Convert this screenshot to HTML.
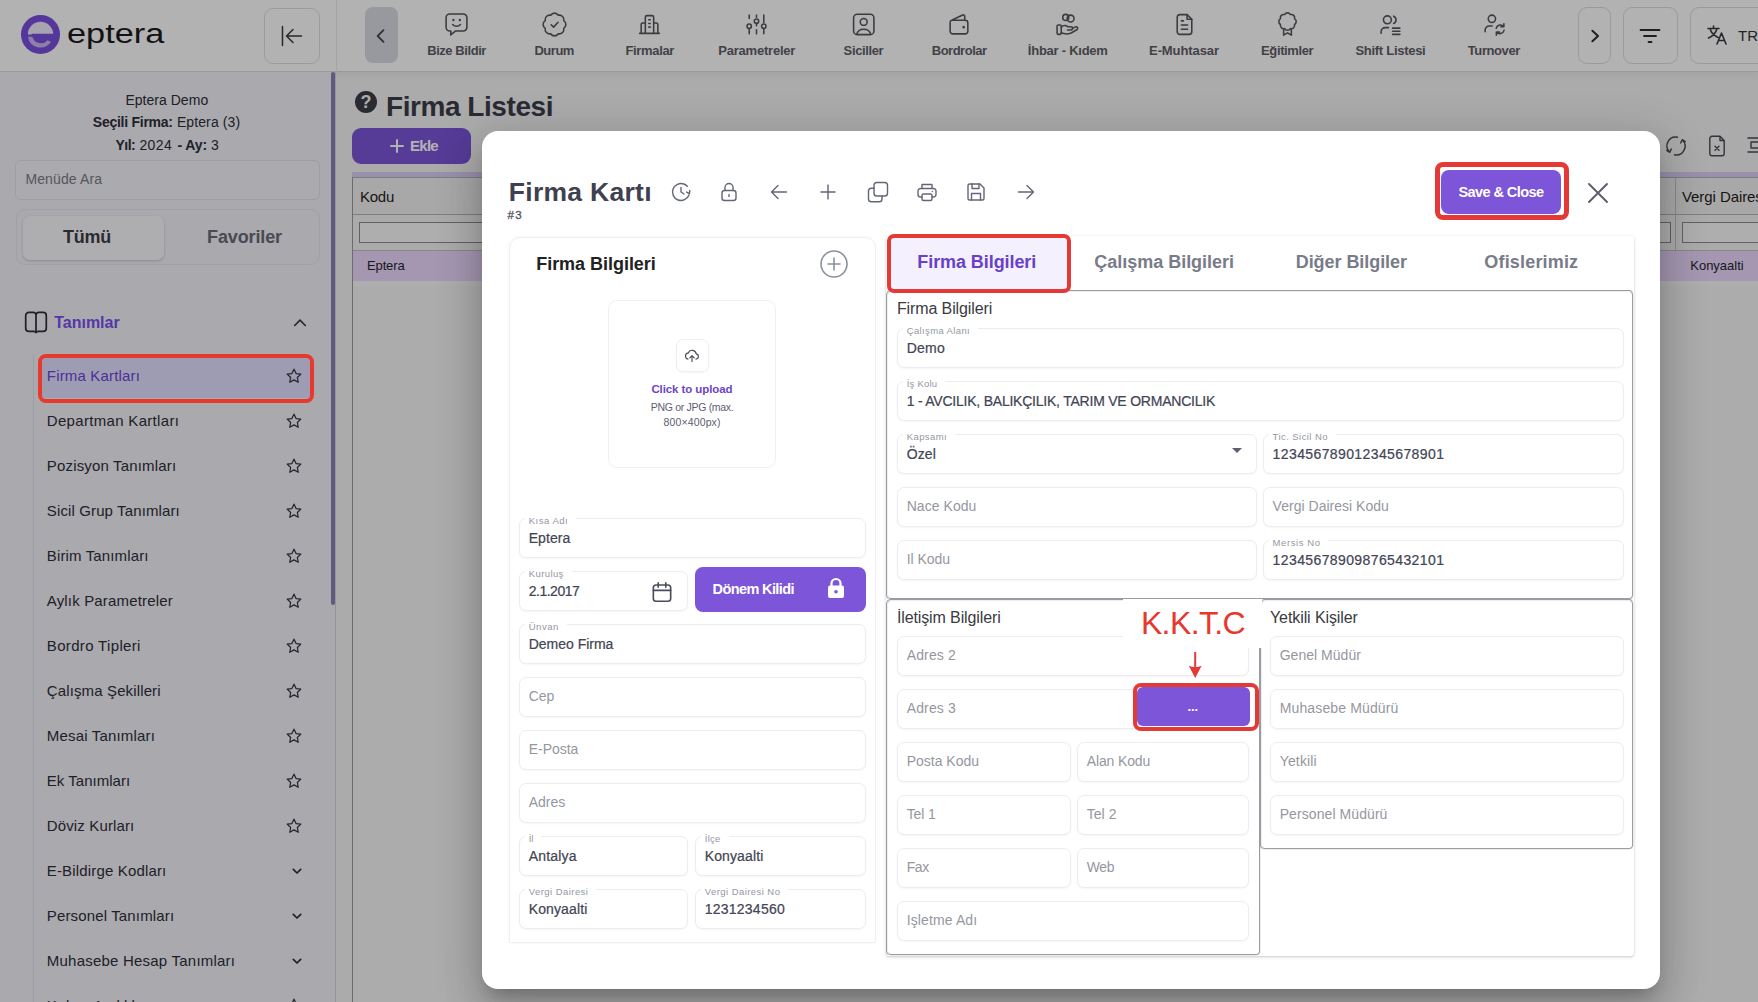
<!DOCTYPE html>
<html lang="tr"><head><meta charset="utf-8"><title>Firma Listesi</title>
<style>
html,body{margin:0;padding:0;}
body{width:1758px;height:1002px;overflow:hidden;position:relative;background:#f5f5f5;font-family:"Liberation Sans",sans-serif;}
.b{position:absolute;box-sizing:border-box;}
.t{position:absolute;white-space:nowrap;display:block;}
.f{position:absolute;box-sizing:border-box;border:1px solid #ededf1;border-radius:7px;background:#fff;box-shadow:0 1px 2px rgba(16,24,40,.04);}
.fs{position:absolute;box-sizing:border-box;border:2px groove rgb(236,238,243);border-radius:5px;}
</style></head><body>
<div class="b" style="left:336px;top:72px;width:1422px;height:930px;background:#f5f5f6;"></div>
<div class="b" style="left:0px;top:0px;width:1758px;height:72px;background:#fff;border-bottom:1px solid #dcdce0;box-shadow:0 2px 8px rgba(0,0,0,.06);"></div>
<div class="b" style="left:0px;top:72px;width:336px;height:930px;background:#f3f3fa;border-right:1px solid #d4d4da;"></div>
<div class="b" style="left:336px;top:0px;width:1px;height:72px;background:#ececef;"></div>
<div class="b" style="left:331px;top:72px;width:4.199999999999989px;height:533px;background:#8c81b7;border-radius:2px;"></div>
<svg class="b" style="left:19.800px;top:13.800px" width="41" height="41" viewBox="0 0 42 42">
<circle cx="21" cy="21" r="20" fill="#7a4fe0"/>
<path d="M8 21a13 13 0 0 1 26 0z" fill="#f0ebfb"/>
<path d="M8.3 24h20.5a8.6 8.6 0 0 1 -14.5 4.8z" fill="#c4b0f2" opacity=".0"/>
<path d="M8.2 23.2a13 13 0 0 0 23.5 5.6l-3.4-2a9 9 0 0 1 -15.6-3.6z" fill="#c9b8f3"/>
<rect x="12" y="20.2" width="22" height="3.4" fill="#7a4fe0"/>
</svg>
<span class="t" style="left:66.80px;top:14.80px;font-size:27px;line-height:38px;color:#1a1a1e;transform:scaleX(1.27);transform-origin:0 50%;">eptera</span>
<div class="b" style="left:264px;top:8px;width:56px;height:56px;border:1px solid #dedee2;border-radius:9px;background:#fff;"></div>
<svg class="b" style="left:279.00px;top:23.30px;" width="26" height="26" viewBox="0 0 26 26" fill="none" stroke="#3a3a42" stroke-width="1.5" stroke-linecap="round" stroke-linejoin="round"><path d="M3.500 3.500v19M22.500 13H8M14 6.500L7.500 13l6.500 6.500"/></svg>
<div class="b" style="left:365px;top:7px;width:33px;height:56px;background:#d9dce3;border-radius:8px;"></div>
<svg class="b" style="left:371.00px;top:26.00px;" width="20" height="20" viewBox="0 0 24 24" fill="none" stroke="#45454d" stroke-width="2.2" stroke-linecap="round" stroke-linejoin="round"><path d="M15 5l-7 7 7 7"/></svg>
<span class="t" style="left:427.18px;top:41.50px;font-size:13px;line-height:18px;color:#5d5e66;font-weight:700;letter-spacing:-0.434px;">Bize Bildir</span>
<svg class="b" style="left:444.30px;top:11.70px;" width="25" height="25" viewBox="0 0 24 24" fill="none" stroke="#55565e" stroke-width="1.5" stroke-linecap="round" stroke-linejoin="round"><path d="M5.500 2h13a3.500 3.500 0 0 1 3.500 3.500v9.200a3.500 3.500 0 0 1-3.500 3.500h-7.300l-4.700 3.800v-3.800h-1a3.500 3.500 0 0 1-3.500-3.500v-9.200a3.500 3.500 0 0 1 3.500-3.500z"/><path d="M9 7.600v.2M15.200 7.600v.2" stroke-width="2.200"/><path d="M8.300 12c2 2.300 5.500 2.300 7.500 0"/></svg>
<span class="t" style="left:534.46px;top:41.50px;font-size:13px;line-height:18px;color:#5d5e66;font-weight:700;letter-spacing:-0.477px;">Durum</span>
<svg class="b" style="left:541.95px;top:11.70px;" width="25" height="25" viewBox="0 0 24 24" fill="none" stroke="#55565e" stroke-width="1.5" stroke-linecap="round" stroke-linejoin="round"><path d="M8.330 3.130A4.300 4.300 0 0 1 15.670 3.130A4.300 4.300 0 0 1 20.870 8.330A4.300 4.300 0 0 1 20.870 15.670A4.300 4.300 0 0 1 15.670 20.870A4.300 4.300 0 0 1 8.330 20.870A4.300 4.300 0 0 1 3.130 15.670A4.300 4.300 0 0 1 3.130 8.330A4.300 4.300 0 0 1 8.330 3.130z"/><path d="M8.800 12.200l2.300 2.300 4.300-4.600"/></svg>
<span class="t" style="left:625.52px;top:41.50px;font-size:13px;line-height:18px;color:#5d5e66;font-weight:700;letter-spacing:-0.351px;">Firmalar</span>
<svg class="b" style="left:637.45px;top:11.70px;" width="25" height="25" viewBox="0 0 24 24" fill="none" stroke="#55565e" stroke-width="1.5" stroke-linecap="round" stroke-linejoin="round"><path d="M2.500 20.500h19M8 20.500V5a1.500 1.500 0 0 1 1.500-1.500h5A1.500 1.500 0 0 1 16 5v15.500M4 20.500V12a1.500 1.500 0 0 1 1.500-1.500H8M16 10.500h2.500A1.500 1.500 0 0 1 20 12v8.500M11.300 7.500h1.400M11.300 11h1.400M11.300 14.500h1.400"/></svg>
<span class="t" style="left:718.29px;top:41.50px;font-size:13px;line-height:18px;color:#5d5e66;font-weight:700;letter-spacing:-0.217px;">Parametreler</span>
<svg class="b" style="left:744.35px;top:11.70px;" width="25" height="25" viewBox="0 0 24 24" fill="none" stroke="#55565e" stroke-width="1.5" stroke-linecap="round" stroke-linejoin="round"><path d="M5 3v3.200M5 15.800v5M12 3v2M12 11v2.200M12 17v3.800M19 3v7M19 15.800v5"/><circle cx="5" cy="13.700" r="2.100"/><circle cx="12" cy="8.800" r="2.100"/><circle cx="19" cy="13.700" r="2.100"/></svg>
<span class="t" style="left:843.61px;top:41.50px;font-size:13px;line-height:18px;color:#5d5e66;font-weight:700;letter-spacing:-0.381px;">Siciller</span>
<svg class="b" style="left:851.10px;top:11.70px;" width="25" height="25" viewBox="0 0 24 24" fill="none" stroke="#55565e" stroke-width="1.5" stroke-linecap="round" stroke-linejoin="round"><rect x="2.500" y="2.200" width="19.500" height="19.500" rx="3.500"/><circle cx="12.200" cy="9.500" r="3.300"/><path d="M5.500 21.300c.8-3.200 3.200-4.800 6.700-4.800s5.900 1.600 6.700 4.800"/></svg>
<span class="t" style="left:931.75px;top:41.50px;font-size:13px;line-height:18px;color:#5d5e66;font-weight:700;letter-spacing:-0.492px;">Bordrolar</span>
<svg class="b" style="left:946.90px;top:11.70px;" width="25" height="25" viewBox="0 0 24 24" fill="none" stroke="#55565e" stroke-width="1.5" stroke-linecap="round" stroke-linejoin="round"><path d="M5 8h12.500a2.500 2.500 0 0 1 2.500 2.500v8a2.500 2.500 0 0 1-2.500 2.500H5.500A2.500 2.500 0 0 1 3 18.500V10c0-1.200.8-2 2-2.300l10-4.800c1-.4 2 .3 2 1.400V8"/><path d="M16 14.500v.1" stroke-width="2.400"/></svg>
<span class="t" style="left:1027.87px;top:41.50px;font-size:13px;line-height:18px;color:#5d5e66;font-weight:700;letter-spacing:-0.252px;">İhbar - Kıdem</span>
<svg class="b" style="left:1055.40px;top:11.70px;" width="25" height="25" viewBox="0 0 24 24" fill="none" stroke="#55565e" stroke-width="1.5" stroke-linecap="round" stroke-linejoin="round"><circle cx="10.300" cy="5.200" r="2.900"/><circle cx="15" cy="6.300" r="3.300"/><rect x="2" y="12.500" width="4" height="9" rx="1"/><path d="M6 14.500c2-1.800 4.500-1.800 6.500-.3h3a1.500 1.500 0 0 1 0 3h-3.500M6 20c3 1.300 6.500 1.300 9.500.2l5.800-3.400a1.500 1.500 0 0 0-1.600-2.500l-3.200 1.700"/></svg>
<span class="t" style="left:1149.06px;top:41.50px;font-size:13px;line-height:18px;color:#5d5e66;font-weight:700;letter-spacing:-0.089px;">E-Muhtasar</span>
<svg class="b" style="left:1171.55px;top:11.70px;" width="25" height="25" viewBox="0 0 24 24" fill="none" stroke="#55565e" stroke-width="1.5" stroke-linecap="round" stroke-linejoin="round"><path d="M14.500 2.500H7.500A2.500 2.500 0 0 0 5 5v14a2.500 2.500 0 0 0 2.500 2.500h9A2.500 2.500 0 0 0 19 19V7z"/><path d="M14.500 2.500V7H19M9 12.500h6M9 16.500h6M9 8.500h2"/></svg>
<span class="t" style="left:1261.10px;top:41.50px;font-size:13px;line-height:18px;color:#5d5e66;font-weight:700;letter-spacing:-0.392px;">Eğitimler</span>
<svg class="b" style="left:1274.85px;top:11.70px;" width="25" height="25" viewBox="0 0 24 24" fill="none" stroke="#55565e" stroke-width="1.5" stroke-linecap="round" stroke-linejoin="round"><path d="M9.210 3.260A3.200 3.200 0 0 1 14.790 3.260A3.200 3.200 0 0 1 18.740 7.210A3.200 3.200 0 0 1 18.740 12.790A3.200 3.200 0 0 1 14.790 16.740A3.200 3.200 0 0 1 9.210 16.740A3.200 3.200 0 0 1 5.260 12.790A3.200 3.200 0 0 1 5.260 7.210A3.200 3.200 0 0 1 9.210 3.260z" transform="translate(0,-.8)"/><path d="M8.300 16.500V22.200l3.700-2.200 3.700 2.200v-5.700"/></svg>
<span class="t" style="left:1355.46px;top:41.50px;font-size:13px;line-height:18px;color:#5d5e66;font-weight:700;letter-spacing:-0.283px;">Shift Listesi</span>
<svg class="b" style="left:1378.10px;top:11.70px;" width="25" height="25" viewBox="0 0 24 24" fill="none" stroke="#55565e" stroke-width="1.5" stroke-linecap="round" stroke-linejoin="round"><circle cx="9" cy="7.500" r="3.800"/><path d="M15 4a3.800 3.800 0 0 1 0 7M3 20.500v-1.500a4 4 0 0 1 4-4h3M14 15.500h7M14 18.500h7M14 21.500h7"/></svg>
<span class="t" style="left:1467.80px;top:41.50px;font-size:13px;line-height:18px;color:#5d5e66;font-weight:700;letter-spacing:-0.410px;">Turnover</span>
<svg class="b" style="left:1481.55px;top:11.70px;" width="25" height="25" viewBox="0 0 24 24" fill="none" stroke="#55565e" stroke-width="1.5" stroke-linecap="round" stroke-linejoin="round"><circle cx="9.500" cy="6.500" r="3.500"/><path d="M3 19v-1.500a4 4 0 0 1 4-4h2.800M13.600 15.600a4.200 4.200 0 0 1 7.300-1.600M21 11.300v2.900h-2.900M21.200 17.600a4.200 4.200 0 0 1-7.300 1.600M13.800 22.200v-2.900h2.900"/></svg>
<div class="b" style="left:1578px;top:7px;width:33px;height:57px;border:1px solid #dedee2;border-radius:9px;"></div>
<svg class="b" style="left:1585.80px;top:26.70px;" width="18" height="18" viewBox="0 0 24 24" fill="none" stroke="#2b2b33" stroke-width="2.7" stroke-linecap="round" stroke-linejoin="round"><path d="M8.500 5l7.500 7-7.500 7"/></svg>
<div class="b" style="left:1623px;top:7px;width:55px;height:57px;border:1px solid #dedee2;border-radius:9px;"></div>
<svg class="b" style="left:1638.00px;top:24.00px;" width="24" height="24" viewBox="0 0 24 24" fill="none" stroke="#2b2b33" stroke-width="1.8" stroke-linecap="round" stroke-linejoin="round"><path d="M2.500 6h19M6 12h12M10.500 18h3"/></svg>
<div class="b" style="left:1690px;top:7px;width:100px;height:57px;border:1px solid #dedee2;border-radius:9px;"></div>
<svg class="b" style="left:1705.00px;top:23.00px;" width="24" height="24" viewBox="0 0 24 24" fill="none" stroke="#3a3a42" stroke-width="1.6" stroke-linecap="round" stroke-linejoin="round"><path d="M3 5.500h11M8.500 3v2.500M5 5.500c1 4 4 7 8 9M12 5.500c-1 4-4 7.500-8.500 9.500M12 21l4.500-11 4.500 11M13.600 17.500h5.800"/></svg>
<span class="t" style="left:1738.00px;top:24.50px;font-size:15px;line-height:21px;color:#33343b;">TR</span>
<span class="t" style="left:125.40px;top:90.00px;font-size:14px;line-height:20px;color:#2e2e38;letter-spacing:0.029px;">Eptera Demo</span>
<span class="t" style="left:92.80px;top:112.00px;font-size:14px;line-height:20px;color:#2e2e38;font-weight:700;letter-spacing:-0.259px;">Seçili Firma:</span>
<span class="t" style="left:176.90px;top:112.00px;font-size:14px;line-height:20px;color:#2e2e38;letter-spacing:0.105px;">Eptera (3)</span>
<span class="t" style="left:115.40px;top:135.00px;font-size:14px;line-height:20px;color:#2e2e38;font-weight:700;letter-spacing:-0.496px;">Yıl:</span>
<span class="t" style="left:139.40px;top:135.00px;font-size:14px;line-height:20px;color:#2e2e38;letter-spacing:0.440px;">2024</span>
<span class="t" style="left:177.50px;top:135.00px;font-size:14px;line-height:20px;color:#2e2e38;font-weight:700;letter-spacing:-0.115px;">- Ay:</span>
<span class="t" style="left:211.00px;top:135.00px;font-size:14px;line-height:20px;color:#2e2e38;letter-spacing:0.015px;">3</span>
<div class="b" style="left:15px;top:160px;width:305px;height:40px;border:1px solid #e3e3ea;border-radius:6px;background:#f4f4fb;"></div>
<span class="t" style="left:25.40px;top:169.00px;font-size:14px;line-height:20px;color:#7b7b86;letter-spacing:0.130px;">Menüde Ara</span>
<div class="b" style="left:16px;top:209px;width:304px;height:56px;border:1px solid #e6e6ee;border-radius:9px;background:#f2f2f9;"></div>
<div class="b" style="left:22.5px;top:216px;width:141.0px;height:43.5px;border-radius:7px;background:#fafafd;box-shadow:0 1px 3px rgba(0,0,0,.18);"></div>
<span class="t" style="left:63.00px;top:224.80px;font-size:18px;line-height:25px;color:#3d3d48;font-weight:700;letter-spacing:-0.248px;">Tümü</span>
<span class="t" style="left:207.00px;top:224.80px;font-size:18px;line-height:25px;color:#6a6a76;font-weight:700;letter-spacing:-0.115px;">Favoriler</span>
<svg class="b" style="left:23.40px;top:309.00px;" width="26" height="26" viewBox="0 0 24 24" fill="none" stroke="#2e2e37" stroke-width="1.6" stroke-linecap="round" stroke-linejoin="round"><path d="M12 4.500v15.500M5.500 3.200h4a2.500 2.500 0 0 1 2.500 2.500 2.500 2.500 0 0 1 2.500-2.500h4a3 3 0 0 1 3 3v11.500a3 3 0 0 1-3 3h-4a2.500 2.500 0 0 0-2.500 1 2.500 2.500 0 0 0-2.500-1h-4a3 3 0 0 1-3-3V6.200a3 3 0 0 1 3-3z"/></svg>
<span class="t" style="left:54.30px;top:311.70px;font-size:16px;line-height:22px;color:#7a50ee;font-weight:700;letter-spacing:-0.025px;">Tanımlar</span>
<svg class="b" style="left:291.50px;top:315.30px;" width="16" height="16" viewBox="0 0 16 16" fill="none" stroke="#3a3a44" stroke-width="1.7" stroke-linecap="round" stroke-linejoin="round"><path d="M2.700 10.500L8 5.200l5.300 5.300"/></svg>
<div class="b" style="left:32.5px;top:355px;width:1.5px;height:647px;background:#e2def5;"></div>
<div class="b" style="left:42px;top:358px;width:268px;height:40px;background:#e3e0ff;border-radius:4px;"></div>
<span class="t" style="left:46.80px;top:364.70px;font-size:15px;line-height:21px;color:#6d45dd;letter-spacing:0.175px;">Firma Kartları</span>
<svg class="b" style="left:283.80px;top:366.00px;" width="20" height="20" viewBox="0 0 24 24" fill="none" stroke="#33333d" stroke-width="1.5" stroke-linecap="round" stroke-linejoin="round"><path d="M12 3.800l2.500 5.300 5.700.7-4.200 4 1.100 5.700L12 16.700l-5.100 2.800 1.100-5.700-4.200-4 5.700-.7z"/></svg>
<span class="t" style="left:46.80px;top:409.70px;font-size:15px;line-height:21px;color:#2e2e38;letter-spacing:0.315px;">Departman Kartları</span>
<svg class="b" style="left:283.80px;top:411.00px;" width="20" height="20" viewBox="0 0 24 24" fill="none" stroke="#33333d" stroke-width="1.5" stroke-linecap="round" stroke-linejoin="round"><path d="M12 3.800l2.500 5.300 5.700.7-4.200 4 1.100 5.700L12 16.700l-5.100 2.800 1.100-5.700-4.200-4 5.700-.7z"/></svg>
<span class="t" style="left:46.80px;top:454.70px;font-size:15px;line-height:21px;color:#2e2e38;letter-spacing:0.169px;">Pozisyon Tanımları</span>
<svg class="b" style="left:283.80px;top:456.00px;" width="20" height="20" viewBox="0 0 24 24" fill="none" stroke="#33333d" stroke-width="1.5" stroke-linecap="round" stroke-linejoin="round"><path d="M12 3.800l2.500 5.300 5.700.7-4.200 4 1.100 5.700L12 16.700l-5.100 2.800 1.100-5.700-4.200-4 5.700-.7z"/></svg>
<span class="t" style="left:46.80px;top:499.70px;font-size:15px;line-height:21px;color:#2e2e38;letter-spacing:0.125px;">Sicil Grup Tanımları</span>
<svg class="b" style="left:283.80px;top:501.00px;" width="20" height="20" viewBox="0 0 24 24" fill="none" stroke="#33333d" stroke-width="1.5" stroke-linecap="round" stroke-linejoin="round"><path d="M12 3.800l2.500 5.300 5.700.7-4.200 4 1.100 5.700L12 16.700l-5.100 2.800 1.100-5.700-4.200-4 5.700-.7z"/></svg>
<span class="t" style="left:46.80px;top:544.70px;font-size:15px;line-height:21px;color:#2e2e38;letter-spacing:0.137px;">Birim Tanımları</span>
<svg class="b" style="left:283.80px;top:546.00px;" width="20" height="20" viewBox="0 0 24 24" fill="none" stroke="#33333d" stroke-width="1.5" stroke-linecap="round" stroke-linejoin="round"><path d="M12 3.800l2.500 5.300 5.700.7-4.200 4 1.100 5.700L12 16.700l-5.100 2.800 1.100-5.700-4.200-4 5.700-.7z"/></svg>
<span class="t" style="left:46.80px;top:589.70px;font-size:15px;line-height:21px;color:#2e2e38;letter-spacing:0.161px;">Aylık Parametreler</span>
<svg class="b" style="left:283.80px;top:591.00px;" width="20" height="20" viewBox="0 0 24 24" fill="none" stroke="#33333d" stroke-width="1.5" stroke-linecap="round" stroke-linejoin="round"><path d="M12 3.800l2.500 5.300 5.700.7-4.200 4 1.100 5.700L12 16.700l-5.100 2.800 1.100-5.700-4.200-4 5.700-.7z"/></svg>
<span class="t" style="left:46.80px;top:634.70px;font-size:15px;line-height:21px;color:#2e2e38;letter-spacing:0.342px;">Bordro Tipleri</span>
<svg class="b" style="left:283.80px;top:636.00px;" width="20" height="20" viewBox="0 0 24 24" fill="none" stroke="#33333d" stroke-width="1.5" stroke-linecap="round" stroke-linejoin="round"><path d="M12 3.800l2.500 5.300 5.700.7-4.200 4 1.100 5.700L12 16.700l-5.100 2.800 1.100-5.700-4.200-4 5.700-.7z"/></svg>
<span class="t" style="left:46.80px;top:679.70px;font-size:15px;line-height:21px;color:#2e2e38;letter-spacing:0.129px;">Çalışma Şekilleri</span>
<svg class="b" style="left:283.80px;top:681.00px;" width="20" height="20" viewBox="0 0 24 24" fill="none" stroke="#33333d" stroke-width="1.5" stroke-linecap="round" stroke-linejoin="round"><path d="M12 3.800l2.500 5.300 5.700.7-4.200 4 1.100 5.700L12 16.700l-5.100 2.800 1.100-5.700-4.200-4 5.700-.7z"/></svg>
<span class="t" style="left:46.80px;top:724.70px;font-size:15px;line-height:21px;color:#2e2e38;letter-spacing:0.173px;">Mesai Tanımları</span>
<svg class="b" style="left:283.80px;top:726.00px;" width="20" height="20" viewBox="0 0 24 24" fill="none" stroke="#33333d" stroke-width="1.5" stroke-linecap="round" stroke-linejoin="round"><path d="M12 3.800l2.500 5.300 5.700.7-4.200 4 1.100 5.700L12 16.700l-5.100 2.800 1.100-5.700-4.200-4 5.700-.7z"/></svg>
<span class="t" style="left:46.80px;top:769.70px;font-size:15px;line-height:21px;color:#2e2e38;letter-spacing:0.026px;">Ek Tanımları</span>
<svg class="b" style="left:283.80px;top:771.00px;" width="20" height="20" viewBox="0 0 24 24" fill="none" stroke="#33333d" stroke-width="1.5" stroke-linecap="round" stroke-linejoin="round"><path d="M12 3.800l2.500 5.300 5.700.7-4.200 4 1.100 5.700L12 16.700l-5.100 2.800 1.100-5.700-4.200-4 5.700-.7z"/></svg>
<span class="t" style="left:46.80px;top:814.70px;font-size:15px;line-height:21px;color:#2e2e38;letter-spacing:0.134px;">Döviz Kurları</span>
<svg class="b" style="left:283.80px;top:816.00px;" width="20" height="20" viewBox="0 0 24 24" fill="none" stroke="#33333d" stroke-width="1.5" stroke-linecap="round" stroke-linejoin="round"><path d="M12 3.800l2.500 5.300 5.700.7-4.200 4 1.100 5.700L12 16.700l-5.100 2.800 1.100-5.700-4.200-4 5.700-.7z"/></svg>
<span class="t" style="left:46.80px;top:859.70px;font-size:15px;line-height:21px;color:#2e2e38;letter-spacing:0.160px;">E-Bildirge Kodları</span>
<svg class="b" style="left:290.30px;top:864.00px;" width="14" height="14" viewBox="0 0 14 14" fill="none" stroke="#2b2b34" stroke-width="1.7" stroke-linecap="round" stroke-linejoin="round"><path d="M3.300 5.300L7 9l3.700-3.700"/></svg>
<span class="t" style="left:46.80px;top:904.70px;font-size:15px;line-height:21px;color:#2e2e38;letter-spacing:0.145px;">Personel Tanımları</span>
<svg class="b" style="left:290.30px;top:909.00px;" width="14" height="14" viewBox="0 0 14 14" fill="none" stroke="#2b2b34" stroke-width="1.7" stroke-linecap="round" stroke-linejoin="round"><path d="M3.300 5.300L7 9l3.700-3.700"/></svg>
<span class="t" style="left:46.80px;top:949.70px;font-size:15px;line-height:21px;color:#2e2e38;letter-spacing:0.218px;">Muhasebe Hesap Tanımları</span>
<svg class="b" style="left:290.30px;top:954.00px;" width="14" height="14" viewBox="0 0 14 14" fill="none" stroke="#2b2b34" stroke-width="1.7" stroke-linecap="round" stroke-linejoin="round"><path d="M3.300 5.300L7 9l3.700-3.700"/></svg>
<span class="t" style="left:46.80px;top:994.70px;font-size:15px;line-height:21px;color:#2e2e38;letter-spacing:-0.030px;">Kıdem Aralıkları</span>
<svg class="b" style="left:283.80px;top:996.00px;" width="20" height="20" viewBox="0 0 24 24" fill="none" stroke="#33333d" stroke-width="1.5" stroke-linecap="round" stroke-linejoin="round"><path d="M12 3.800l2.500 5.300 5.700.7-4.200 4 1.100 5.700L12 16.700l-5.100 2.800 1.100-5.700-4.200-4 5.700-.7z"/></svg>
<svg class="b" style="left:355px;top:91px" width="22" height="22" viewBox="0 0 22 22"><circle cx="11" cy="11" r="11" fill="#3d3d47"/></svg>
<span class="t" style="left:360.50px;top:90.00px;font-size:18px;line-height:25px;color:#f5f5f6;font-weight:700;">?</span>
<span class="t" style="left:386.00px;top:86.50px;font-size:28px;line-height:39px;color:#3d3d49;font-weight:700;letter-spacing:-0.443px;">Firma Listesi</span>
<div class="b" style="left:352px;top:128px;width:119px;height:36px;background:#7c55d9;border-radius:9px;"></div>
<svg class="b" style="left:388.50px;top:137.50px;" width="16" height="16" viewBox="0 0 16 16" fill="none" stroke="#fff" stroke-width="2" stroke-linecap="round" stroke-linejoin="round"><path d="M8 2v12M2 8h12"/></svg>
<span class="t" style="left:410.00px;top:134.80px;font-size:15px;line-height:21px;color:#fff;font-weight:700;letter-spacing:-0.715px;">Ekle</span>
<svg class="b" style="left:1664.40px;top:134.00px;" width="24" height="24" viewBox="0 0 24 24" fill="none" stroke="#4a4a55" stroke-width="1.4" stroke-linecap="round" stroke-linejoin="round"><path d="M13.500 3.200A8.800 8.800 0 0 0 5.500 18M2.800 16.300l2.900 2 1.600-3.200M10.500 20.800A8.800 8.800 0 0 0 18.500 6M21.200 7.700l-2.900-2-1.600 3.200"/></svg>
<svg class="b" style="left:1705.30px;top:134.00px;" width="24" height="24" viewBox="0 0 24 24" fill="none" stroke="#4a4a55" stroke-width="1.4" stroke-linecap="round" stroke-linejoin="round"><path d="M15 2.300H7A2.200 2.200 0 0 0 4.800 4.500v15A2.200 2.200 0 0 0 7 21.700h10a2.200 2.200 0 0 0 2.200-2.200V6.500zM15 2.300v4.200h4.200M10 12.300l4 4M14 12.300l-4 4"/></svg>
<svg class="b" style="left:1745.00px;top:134.00px;" width="24" height="24" viewBox="0 0 24 24" fill="none" stroke="#4a4a55" stroke-width="1.4" stroke-linecap="round" stroke-linejoin="round"><path d="M3 4h18M6 8h18v6H6zM3 18h18" /></svg>
<div class="b" style="left:352px;top:172px;width:1406px;height:5px;background:#dccff8;"></div>
<div class="b" style="left:352px;top:177px;width:1406px;height:825px;background:#f7f7f7;border-left:1px solid #9b9b9b;"></div>
<div class="b" style="left:353px;top:177px;width:1405px;height:38px;background:#f1f1f1;border-top:1px solid #b5b5b5;border-bottom:1px solid #b5b5b5;"></div>
<div class="b" style="left:353px;top:215px;width:1405px;height:36px;background:#f4f4f4;border-bottom:1px solid #c2c2c2;"></div>
<div class="b" style="left:353px;top:251px;width:1405px;height:30px;background:#ecd9ff;"></div>
<div class="b" style="left:353px;top:281px;width:1405px;height:5px;background:#fafafa;"></div>
<div class="b" style="left:1675px;top:178px;width:1px;height:72px;background:#c4c4c4;"></div>
<span class="t" style="left:360.00px;top:185.50px;font-size:15px;line-height:21px;color:#1e1e22;letter-spacing:-0.259px;">Kodu</span>
<span class="t" style="left:1682.00px;top:185.50px;font-size:15px;line-height:21px;color:#1e1e22;letter-spacing:-0.080px;">Vergi Dairesi</span>
<div class="b" style="left:359px;top:222px;width:1312px;height:21px;border:1px solid #8b8b8b;background:#f9f9f9;"></div>
<div class="b" style="left:1682px;top:222px;width:108px;height:21px;border:1px solid #8b8b8b;background:#f9f9f9;"></div>
<span class="t" style="left:367.00px;top:257.30px;font-size:13px;line-height:18px;color:#26262c;letter-spacing:-0.134px;">Eptera</span>
<span class="t" style="left:1690.30px;top:257.30px;font-size:13px;line-height:18px;color:#26262c;letter-spacing:-0.020px;">Konyaalti</span>
<div class="b" style="left:0px;top:0px;width:1758px;height:1002px;background:rgba(0,0,0,.3);"></div>
<div class="b" style="left:38px;top:354px;width:276px;height:48.5px;border:4.500px solid #e8392f;border-radius:8px;"></div>
<div class="b" style="left:482px;top:131px;width:1178px;height:858px;background:#fff;border-radius:16px;box-shadow:0 11px 15px -7px rgba(0,0,0,.2),0 24px 38px 3px rgba(0,0,0,.14),0 9px 46px 8px rgba(0,0,0,.12);"></div>
<span class="t" style="left:508.80px;top:173.50px;font-size:26.5px;line-height:37px;color:#3f4150;font-weight:700;letter-spacing:0.282px;">Firma Kartı</span>
<span class="t" style="left:507.50px;top:206.50px;font-size:11.5px;line-height:16px;color:#4d4f5c;letter-spacing:1.355px;-webkit-text-stroke:.3px #4d4f5c;">#3</span>
<svg class="b" style="left:668.60px;top:180.00px;" width="24" height="24" viewBox="0 0 24 24" fill="none" stroke="#636677" stroke-width="1.4" stroke-linecap="round" stroke-linejoin="round"><circle cx="12" cy="12" r="8.500" stroke-dasharray="44 9.4" transform="rotate(20 12 12)"/><path d="M12 7.500V12l3 2"/><path d="M20.800 10.500l-.4 3.200-2.800-1.600" /></svg>
<svg class="b" style="left:716.60px;top:180.00px;" width="24" height="24" viewBox="0 0 24 24" fill="none" stroke="#636677" stroke-width="1.4" stroke-linecap="round" stroke-linejoin="round"><rect x="5" y="10.500" width="14" height="10" rx="2.500"/><path d="M8 10.500V7.500a4 4 0 0 1 8 0v3M12 14.500v2"/></svg>
<svg class="b" style="left:766.50px;top:180.00px;" width="24" height="24" viewBox="0 0 24 24" fill="none" stroke="#636677" stroke-width="1.4" stroke-linecap="round" stroke-linejoin="round"><path d="M19.500 12h-15M11 5.500L4.500 12l6.500 6.500"/></svg>
<svg class="b" style="left:815.60px;top:180.00px;" width="24" height="24" viewBox="0 0 24 24" fill="none" stroke="#636677" stroke-width="1.4" stroke-linecap="round" stroke-linejoin="round"><path d="M12 5v14M5 12h14"/></svg>
<svg class="b" style="left:865.90px;top:180.00px;" width="24" height="24" viewBox="0 0 24 24" fill="none" stroke="#636677" stroke-width="1.4" stroke-linecap="round" stroke-linejoin="round"><rect x="8" y="2.500" width="13.500" height="13.500" rx="2.800"/><path d="M16 16v3a2.800 2.800 0 0 1-2.800 2.800H5.300A2.800 2.800 0 0 1 2.500 19V11A2.800 2.800 0 0 1 5.300 8.200H8"/></svg>
<svg class="b" style="left:914.50px;top:180.00px;" width="24" height="24" viewBox="0 0 24 24" fill="none" stroke="#636677" stroke-width="1.4" stroke-linecap="round" stroke-linejoin="round"><path d="M7 8.500V4.500h10v4M7 17H5.500a2.500 2.500 0 0 1-2.500-2.500V11A2.500 2.500 0 0 1 5.500 8.500h13A2.500 2.500 0 0 1 21 11v3.500a2.500 2.500 0 0 1-2.500 2.500H17"/><rect x="7" y="14" width="10" height="6.500" rx="1.500"/><path d="M17.300 11.500v.1"/></svg>
<svg class="b" style="left:964.40px;top:180.00px;" width="24" height="24" viewBox="0 0 24 24" fill="none" stroke="#636677" stroke-width="1.4" stroke-linecap="round" stroke-linejoin="round"><path d="M5.500 4h10.500l4 4v10.500a1.500 1.500 0 0 1-1.500 1.500h-13A1.500 1.500 0 0 1 4 18.500v-13A1.500 1.500 0 0 1 5.500 4z"/><path d="M8 4v4.500h7V4M7.500 20v-6.500h9V20"/></svg>
<svg class="b" style="left:1013.90px;top:180.00px;" width="24" height="24" viewBox="0 0 24 24" fill="none" stroke="#636677" stroke-width="1.4" stroke-linecap="round" stroke-linejoin="round"><path d="M4.500 12h15M13 5.500l6.500 6.500-6.500 6.500"/></svg>
<div class="b" style="left:1435px;top:162.3px;width:133.5px;height:58.19999999999999px;border:5px solid #e53935;border-radius:8px;"></div>
<div class="b" style="left:1441px;top:170px;width:120px;height:44px;background:#7c55d9;border-radius:8px;"></div>
<span class="t" style="left:1458.40px;top:182.30px;font-size:14.5px;line-height:20px;color:#fff;font-weight:700;letter-spacing:-0.572px;">Save &amp; Close</span>
<svg class="b" style="left:1585.70px;top:180.80px;" width="24" height="24" viewBox="0 0 24 24" fill="none" stroke="#5a5d6b" stroke-width="1.9" stroke-linecap="round" stroke-linejoin="round"><path d="M3 3l18 18M21 3L3 21"/></svg>
<div class="b" style="left:509px;top:237px;width:367px;height:706px;border:1px solid #f0f0f4;border-radius:11px 11px 0 0;box-shadow:0 0 3px rgba(0,0,0,.05);"></div>
<span class="t" style="left:536.20px;top:251.90px;font-size:18px;line-height:25px;color:#222;font-weight:700;letter-spacing:-0.028px;">Firma Bilgileri</span>
<svg class="b" style="left:818.90px;top:249.00px;" width="30" height="30" viewBox="0 0 30 30" fill="none" stroke="#8b90a0" stroke-width="1.6" stroke-linecap="round" stroke-linejoin="round"><circle cx="15" cy="15" r="13"/><path d="M15 9v12M9 15h12"/></svg>
<div class="b" style="left:608px;top:300px;width:168px;height:168px;border:1px solid #f0f0f4;border-radius:9px;"></div>
<div class="b" style="left:676px;top:339px;width:33px;height:33px;border:1px solid #efeff3;border-radius:7px;box-shadow:0 1px 2px rgba(0,0,0,.05);"></div>
<svg class="b" style="left:683.00px;top:346.50px;" width="18" height="18" viewBox="0 0 20 20" fill="none" stroke="#4a4d5a" stroke-width="1.3" stroke-linecap="round" stroke-linejoin="round"><path d="M5.500 13.500A3.500 3.500 0 0 1 6 6.600a4.500 4.500 0 0 1 8.700 1A3 3 0 0 1 14.500 13.500M10 9.500v6.500M7.500 12l2.500-2.500 2.500 2.500"/></svg>
<span class="t" style="left:651.40px;top:381.30px;font-size:11.5px;line-height:16px;color:#6d45c8;font-weight:700;letter-spacing:-0.094px;">Click to upload</span>
<span class="t" style="left:650.70px;top:400.30px;font-size:10.5px;line-height:15px;color:#5d6070;letter-spacing:-0.301px;">PNG or JPG (max.</span>
<span class="t" style="left:663.60px;top:415.10px;font-size:10.5px;line-height:15px;color:#5d6070;letter-spacing:0.124px;">800×400px)</span>
<div class="f" style="left:519px;top:518px;width:347px;height:40px"></div>
<div class="b" style="left:525px;top:517px;width:51px;height:4px;background:#fff;"></div>
<span class="t" style="left:528.70px;top:514.00px;font-size:9.5px;line-height:13px;color:#9497a3;letter-spacing:0.526px;">Kısa Adı</span>
<span class="t" style="left:528.70px;top:528.00px;font-size:14px;line-height:20px;color:#424554;letter-spacing:0.058px;-webkit-text-stroke:.22px #424554;">Eptera</span>
<div class="f" style="left:519px;top:571px;width:169px;height:40px"></div>
<div class="b" style="left:525px;top:570px;width:47px;height:4px;background:#fff;"></div>
<span class="t" style="left:528.70px;top:567.00px;font-size:9.5px;line-height:13px;color:#9497a3;letter-spacing:0.412px;">Kuruluş</span>
<span class="t" style="left:528.70px;top:581.00px;font-size:14px;line-height:20px;color:#424554;letter-spacing:-0.487px;-webkit-text-stroke:.22px #424554;">2.1.2017</span>
<svg class="b" style="left:649.00px;top:579.00px;" width="26" height="26" viewBox="0 0 24 24" fill="none" stroke="#4a4d5a" stroke-width="1.5" stroke-linecap="round" stroke-linejoin="round"><rect x="4" y="5.500" width="16" height="15" rx="2.500"/><path d="M4 10.500h16M8.500 3.500v4M15.500 3.500v4"/></svg>
<div class="b" style="left:694.5px;top:567px;width:171.0px;height:44.5px;background:#7c55d9;border-radius:8px;"></div>
<span class="t" style="left:712.60px;top:579.20px;font-size:14.5px;line-height:20px;color:#fff;font-weight:700;letter-spacing:-0.617px;">Dönem Kilidi</span>
<svg class="b" style="left:826.400px;top:576.500px" width="20" height="22" viewBox="0 0 20 22"><path d="M5.500 9V6.500a4.500 4.500 0 0 1 9 0V9" fill="none" stroke="#fff" stroke-width="2.200"/><rect x="2" y="8.500" width="16" height="12.500" rx="2" fill="#fff"/><circle cx="10" cy="14.800" r="1.800" fill="#7c55d9"/></svg>
<div class="f" style="left:519px;top:624px;width:347px;height:40px"></div>
<div class="b" style="left:525px;top:623px;width:42px;height:4px;background:#fff;"></div>
<span class="t" style="left:528.70px;top:620.00px;font-size:9.5px;line-height:13px;color:#9497a3;letter-spacing:0.527px;">Ünvan</span>
<span class="t" style="left:528.70px;top:634.00px;font-size:14px;line-height:20px;color:#424554;letter-spacing:-0.008px;-webkit-text-stroke:.22px #424554;">Demeo Firma</span>
<div class="f" style="left:519px;top:677px;width:347px;height:40px"></div>
<span class="t" style="left:528.70px;top:686.40px;font-size:14px;line-height:20px;color:#95979f;letter-spacing:-0.027px;">Cep</span>
<div class="f" style="left:519px;top:730px;width:347px;height:40px"></div>
<span class="t" style="left:528.70px;top:739.40px;font-size:14px;line-height:20px;color:#95979f;letter-spacing:-0.029px;">E-Posta</span>
<div class="f" style="left:519px;top:783px;width:347px;height:40px"></div>
<span class="t" style="left:528.70px;top:792.40px;font-size:14px;line-height:20px;color:#95979f;letter-spacing:0.005px;">Adres</span>
<div class="f" style="left:519px;top:836px;width:169px;height:40px"></div>
<div class="b" style="left:525px;top:835px;width:16px;height:4px;background:#fff;"></div>
<span class="t" style="left:528.70px;top:832.00px;font-size:9.5px;line-height:13px;color:#9497a3;letter-spacing:-0.125px;">İl</span>
<span class="t" style="left:528.70px;top:846.00px;font-size:14px;line-height:20px;color:#424554;letter-spacing:0.201px;-webkit-text-stroke:.22px #424554;">Antalya</span>
<div class="f" style="left:695px;top:836px;width:171px;height:40px"></div>
<div class="b" style="left:701px;top:835px;width:28px;height:4px;background:#fff;"></div>
<span class="t" style="left:704.70px;top:832.00px;font-size:9.5px;line-height:13px;color:#9497a3;letter-spacing:0.304px;">İlçe</span>
<span class="t" style="left:704.70px;top:846.00px;font-size:14px;line-height:20px;color:#424554;letter-spacing:0.123px;-webkit-text-stroke:.22px #424554;">Konyaalti</span>
<div class="f" style="left:519px;top:889px;width:169px;height:40px"></div>
<div class="b" style="left:525px;top:888px;width:71px;height:4px;background:#fff;"></div>
<span class="t" style="left:528.70px;top:885.00px;font-size:9.5px;line-height:13px;color:#9497a3;letter-spacing:0.449px;">Vergi Dairesi</span>
<span class="t" style="left:528.70px;top:899.00px;font-size:14px;line-height:20px;color:#424554;letter-spacing:0.123px;-webkit-text-stroke:.22px #424554;">Konyaalti</span>
<div class="f" style="left:695px;top:889px;width:171px;height:40px"></div>
<div class="b" style="left:701px;top:888px;width:87px;height:4px;background:#fff;"></div>
<span class="t" style="left:704.70px;top:885.00px;font-size:9.5px;line-height:13px;color:#9497a3;letter-spacing:0.441px;">Vergi Dairesi No</span>
<span class="t" style="left:704.70px;top:899.00px;font-size:14px;line-height:20px;color:#424554;letter-spacing:0.245px;-webkit-text-stroke:.22px #424554;">1231234560</span>
<div class="b" style="left:886px;top:236px;width:748px;height:720px;background:#fff;border-radius:3px;box-shadow:0 1px 3px rgba(0,0,0,.22);"></div>
<div class="b" style="left:886.5px;top:234px;width:184.5px;height:58.5px;border:4px solid #e53935;border-radius:7px;background:#f4f0fe;z-index:3;"></div>
<span class="t" style="left:917.30px;top:249.50px;font-size:18px;line-height:25px;color:#6941c6;font-weight:700;letter-spacing:-0.075px;z-index:4;">Firma Bilgileri</span>
<span class="t" style="left:1094.30px;top:249.50px;font-size:18px;line-height:25px;color:#787b88;font-weight:700;letter-spacing:-0.021px;">Çalışma Bilgileri</span>
<span class="t" style="left:1295.70px;top:249.50px;font-size:18px;line-height:25px;color:#787b88;font-weight:700;letter-spacing:-0.052px;">Diğer Bilgiler</span>
<span class="t" style="left:1484.30px;top:249.50px;font-size:18px;line-height:25px;color:#787b88;font-weight:700;letter-spacing:0.179px;">Ofislerimiz</span>
<div class="fs" style="left:886px;top:290px;width:748px;height:310px"></div>
<span class="t" style="left:896.90px;top:297.50px;font-size:16px;line-height:22px;color:#3a3a3f;letter-spacing:-0.107px;">Firma Bilgileri</span>
<div class="f" style="left:897px;top:328px;width:727px;height:40px"></div>
<div class="b" style="left:903px;top:327px;width:75px;height:4px;background:#fff;"></div>
<span class="t" style="left:906.70px;top:324.00px;font-size:9.5px;line-height:13px;color:#9497a3;letter-spacing:0.368px;">Çalışma Alanı</span>
<span class="t" style="left:906.70px;top:338.00px;font-size:14px;line-height:20px;color:#424554;letter-spacing:0.214px;-webkit-text-stroke:.22px #424554;">Demo</span>
<div class="f" style="left:897px;top:381px;width:727px;height:40px"></div>
<div class="b" style="left:903px;top:380px;width:42px;height:4px;background:#fff;"></div>
<span class="t" style="left:906.70px;top:377.00px;font-size:9.5px;line-height:13px;color:#9497a3;letter-spacing:0.222px;">İş Kolu</span>
<span class="t" style="left:906.70px;top:391.00px;font-size:14px;line-height:20px;color:#424554;letter-spacing:-0.224px;-webkit-text-stroke:.22px #424554;">1 - AVCILIK, BALIKÇILIK, TARIM VE ORMANCILIK</span>
<div class="f" style="left:897px;top:434px;width:360px;height:40px"></div>
<div class="b" style="left:903px;top:433px;width:52px;height:4px;background:#fff;"></div>
<span class="t" style="left:906.70px;top:430.00px;font-size:9.5px;line-height:13px;color:#9497a3;letter-spacing:0.415px;">Kapsamı</span>
<span class="t" style="left:906.70px;top:444.00px;font-size:14px;line-height:20px;color:#424554;letter-spacing:0.129px;-webkit-text-stroke:.22px #424554;">Özel</span>
<svg class="b" style="left:1232px;top:447.500px" width="10" height="5" viewBox="0 0 10 5"><path d="M0 0h10L5 5z" fill="#5d6070"/></svg>
<div class="f" style="left:1263px;top:434px;width:361px;height:40px"></div>
<div class="b" style="left:1269px;top:433px;width:67px;height:4px;background:#fff;"></div>
<span class="t" style="left:1272.60px;top:430.00px;font-size:9.5px;line-height:13px;color:#9497a3;letter-spacing:0.431px;">Tic. Sicil No</span>
<span class="t" style="left:1272.60px;top:444.00px;font-size:14px;line-height:20px;color:#424554;letter-spacing:0.391px;-webkit-text-stroke:.22px #424554;">123456789012345678901</span>
<div class="f" style="left:897px;top:487px;width:360px;height:40px"></div>
<span class="t" style="left:906.70px;top:496.40px;font-size:14px;line-height:20px;color:#95979f;letter-spacing:0.048px;">Nace Kodu</span>
<div class="f" style="left:1263px;top:487px;width:361px;height:40px"></div>
<span class="t" style="left:1272.60px;top:496.40px;font-size:14px;line-height:20px;color:#95979f;letter-spacing:0.019px;">Vergi Dairesi Kodu</span>
<div class="f" style="left:897px;top:540px;width:360px;height:40px"></div>
<span class="t" style="left:906.70px;top:549.40px;font-size:14px;line-height:20px;color:#95979f;letter-spacing:-0.027px;">Il Kodu</span>
<div class="f" style="left:1263px;top:540px;width:361px;height:40px"></div>
<div class="b" style="left:1269px;top:539px;width:59px;height:4px;background:#fff;"></div>
<span class="t" style="left:1272.60px;top:536.00px;font-size:9.5px;line-height:13px;color:#9497a3;letter-spacing:0.571px;">Mersis No</span>
<span class="t" style="left:1272.60px;top:550.00px;font-size:14px;line-height:20px;color:#424554;letter-spacing:0.391px;-webkit-text-stroke:.22px #424554;">123456789098765432101</span>
<div class="fs" style="left:886px;top:599px;width:375px;height:357px"></div>
<div class="fs" style="left:1260px;top:599px;width:374px;height:251px"></div>
<span class="t" style="left:896.90px;top:606.50px;font-size:16px;line-height:22px;color:#3a3a3f;letter-spacing:-0.111px;">İletişim Bilgileri</span>
<span class="t" style="left:1270.00px;top:606.50px;font-size:16px;line-height:22px;color:#3a3a3f;letter-spacing:-0.095px;">Yetkili Kişiler</span>
<div class="f" style="left:897px;top:636px;width:352px;height:40px"></div>
<span class="t" style="left:906.70px;top:645.40px;font-size:14px;line-height:20px;color:#95979f;letter-spacing:0.150px;">Adres 2</span>
<div class="f" style="left:897px;top:689px;width:352px;height:40px"></div>
<span class="t" style="left:906.70px;top:698.40px;font-size:14px;line-height:20px;color:#95979f;letter-spacing:0.150px;">Adres 3</span>
<div class="f" style="left:897px;top:742px;width:174px;height:40px"></div>
<span class="t" style="left:906.70px;top:751.40px;font-size:14px;line-height:20px;color:#95979f;letter-spacing:-0.009px;">Posta Kodu</span>
<div class="f" style="left:1077px;top:742px;width:172px;height:40px"></div>
<span class="t" style="left:1086.70px;top:751.40px;font-size:14px;line-height:20px;color:#95979f;letter-spacing:-0.123px;">Alan Kodu</span>
<div class="f" style="left:897px;top:795px;width:174px;height:40px"></div>
<span class="t" style="left:906.70px;top:804.40px;font-size:14px;line-height:20px;color:#95979f;letter-spacing:-0.134px;">Tel 1</span>
<div class="f" style="left:1077px;top:795px;width:172px;height:40px"></div>
<span class="t" style="left:1086.70px;top:804.40px;font-size:14px;line-height:20px;color:#95979f;letter-spacing:0.046px;">Tel 2</span>
<div class="f" style="left:897px;top:848px;width:174px;height:40px"></div>
<span class="t" style="left:906.70px;top:857.40px;font-size:14px;line-height:20px;color:#95979f;letter-spacing:-0.379px;">Fax</span>
<div class="f" style="left:1077px;top:848px;width:172px;height:40px"></div>
<span class="t" style="left:1086.70px;top:857.40px;font-size:14px;line-height:20px;color:#95979f;letter-spacing:-0.310px;">Web</span>
<div class="f" style="left:897px;top:901px;width:352px;height:40px"></div>
<span class="t" style="left:906.70px;top:910.40px;font-size:14px;line-height:20px;color:#95979f;letter-spacing:0.122px;">Işletme Adı</span>
<div class="f" style="left:1270px;top:636px;width:354px;height:40px"></div>
<span class="t" style="left:1279.70px;top:645.40px;font-size:14px;line-height:20px;color:#95979f;letter-spacing:0.025px;">Genel Müdür</span>
<div class="f" style="left:1270px;top:689px;width:354px;height:40px"></div>
<span class="t" style="left:1279.70px;top:698.40px;font-size:14px;line-height:20px;color:#95979f;letter-spacing:0.138px;">Muhasebe Müdürü</span>
<div class="f" style="left:1270px;top:742px;width:354px;height:40px"></div>
<span class="t" style="left:1279.70px;top:751.40px;font-size:14px;line-height:20px;color:#95979f;letter-spacing:0.163px;">Yetkili</span>
<div class="f" style="left:1270px;top:795px;width:354px;height:40px"></div>
<span class="t" style="left:1279.70px;top:804.40px;font-size:14px;line-height:20px;color:#95979f;letter-spacing:0.079px;">Personel Müdürü</span>
<div class="b" style="left:1123px;top:599px;width:139px;height:49px;background:#fff;"></div>
<span class="t" style="left:1140.90px;top:601.20px;font-size:32px;line-height:45px;color:#e8382d;letter-spacing:-0.610px;">K.K.T.C</span>
<svg class="b" style="left:1185px;top:650px" width="20" height="30" viewBox="0 0 20 30"><path d="M10.200 2v18" stroke="#e53935" stroke-width="2" fill="none"/><path d="M3.800 15.800l6.400 12.200 6.400-12.200c-3.800 1.900-9 1.900-12.800 0z" fill="#e53935"/></svg>
<div class="b" style="left:1132.5px;top:682.5px;width:126.0px;height:48.5px;border:4.500px solid #e53935;border-radius:8px;background:#fff;"></div>
<div class="b" style="left:1137px;top:687px;width:112.5px;height:39px;background:#7c55d9;border-radius:6px;"></div>
<span class="t" style="left:1187.38px;top:698.00px;font-size:13px;line-height:18px;color:#fff;font-weight:700;">...</span>
</body></html>
